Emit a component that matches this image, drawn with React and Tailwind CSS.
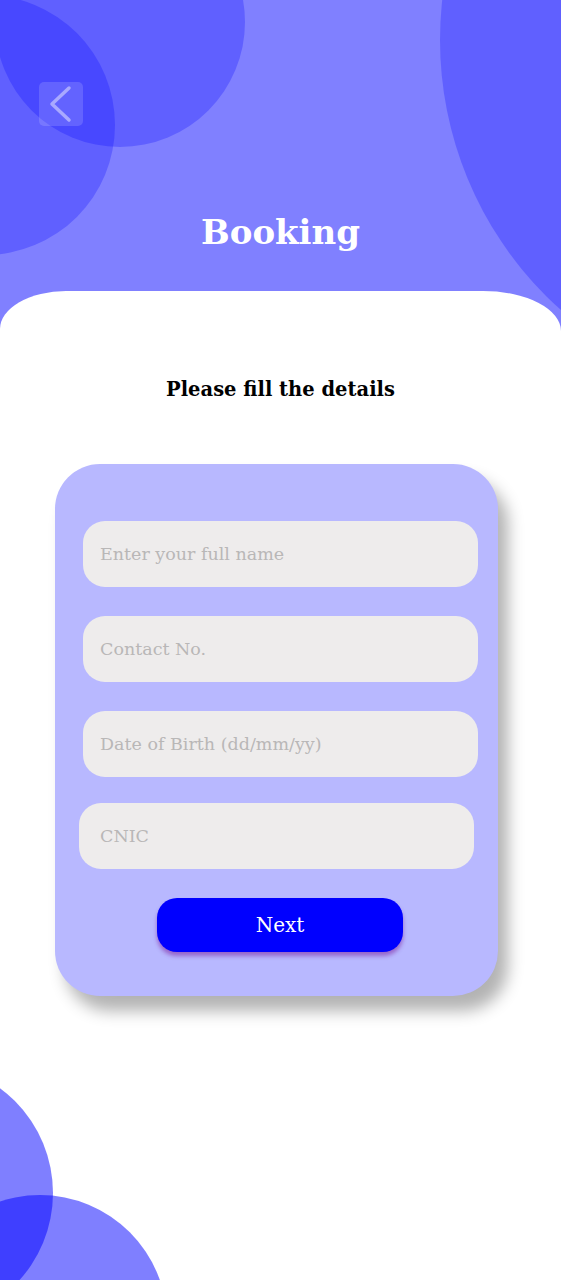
import React from 'react';

const slab = { fontFamily: '"DejaVu Serif", "Liberation Serif", serif' };

const fields = [
  { placeholder: 'Enter your full name', shift: 'pl-[17px]' },
  { placeholder: 'Contact No.', shift: 'pl-[17px]' },
  { placeholder: 'Date of Birth (dd/mm/yy)', shift: 'pl-[17px]' },
  { placeholder: 'CNIC', shift: 'pl-[21px] ml-[-4px] mt-[-3px]' },
];

export default function App() {
  return (
    <div className="relative w-full h-[1280px] overflow-hidden bg-[#8080ff]" style={slab}>
      {/* decorative circles behind the sheet */}
      <div className="absolute left-[-5px] top-[-103px] w-[250px] h-[250px] rounded-full bg-[#0000ff]/25" />
      <div className="absolute left-[-145px] top-[-5px] w-[260px] h-[260px] rounded-full bg-[#0000ff]/25" />
      <div className="absolute left-[440px] top-[-322px] w-[724px] h-[724px] rounded-full bg-[#0000ff]/25" />

      {/* header */}
      <div className="relative z-10 h-[291px] flex flex-col">
        <div className="pt-[82px] pl-[39px]">
          <button className="w-[44px] h-[44px] rounded-[5px] bg-white/15 flex items-center justify-center">
            <svg width="44" height="44" viewBox="0 0 44 44" fill="none">
              <path d="M30 6 L13 22 L30 38" stroke="#a9a9ff" strokeWidth="3.5" strokeLinecap="round" strokeLinejoin="round" />
            </svg>
          </button>
        </div>
        <h1 className="mt-[82px] text-center text-white font-bold text-[34px] leading-[48px]">Booking</h1>
      </div>

      {/* white sheet */}
      <div className="relative z-10 bg-white rounded-tl-[66px_38px] rounded-tr-[78px_40px] h-[989px] flex flex-col items-center pt-[85px]">
        <p className="text-black font-bold text-[19.5px] leading-[28px]">Please fill the details</p>

        <div className="mt-[60px] self-start ml-[55px] w-[443px] rounded-[45px] bg-[#b8b8ff] pt-[57px] pb-[44px] pl-[28px] flex flex-col gap-[29px] shadow-[10px_15px_16px_rgba(0,0,0,0.3)]">
          {fields.map((f) => (
            <div
              key={f.placeholder}
              className={`w-[395px] h-[66px] rounded-[22px] bg-[#eeecec] flex items-center text-[17.5px] text-[#b9b7b7] ${f.shift}`}
            >
              {f.placeholder}
            </div>
          ))}
          <button className="ml-[74px] w-[246px] h-[54px] rounded-[20px] bg-[#0000ff] text-white text-[20px] shadow-[0_4px_4px_rgba(110,0,140,0.45)]">
            Next
          </button>
        </div>
      </div>

      {/* decorative circles at the bottom */}
      <div className="absolute z-20 left-[-207px] top-[1063px] w-[260px] h-[260px] rounded-full bg-[#0000ff]/50" />
      <div className="absolute z-20 left-[-87px] top-[1195px] w-[254px] h-[254px] rounded-full bg-[#0000ff]/50" />
    </div>
  );
}
